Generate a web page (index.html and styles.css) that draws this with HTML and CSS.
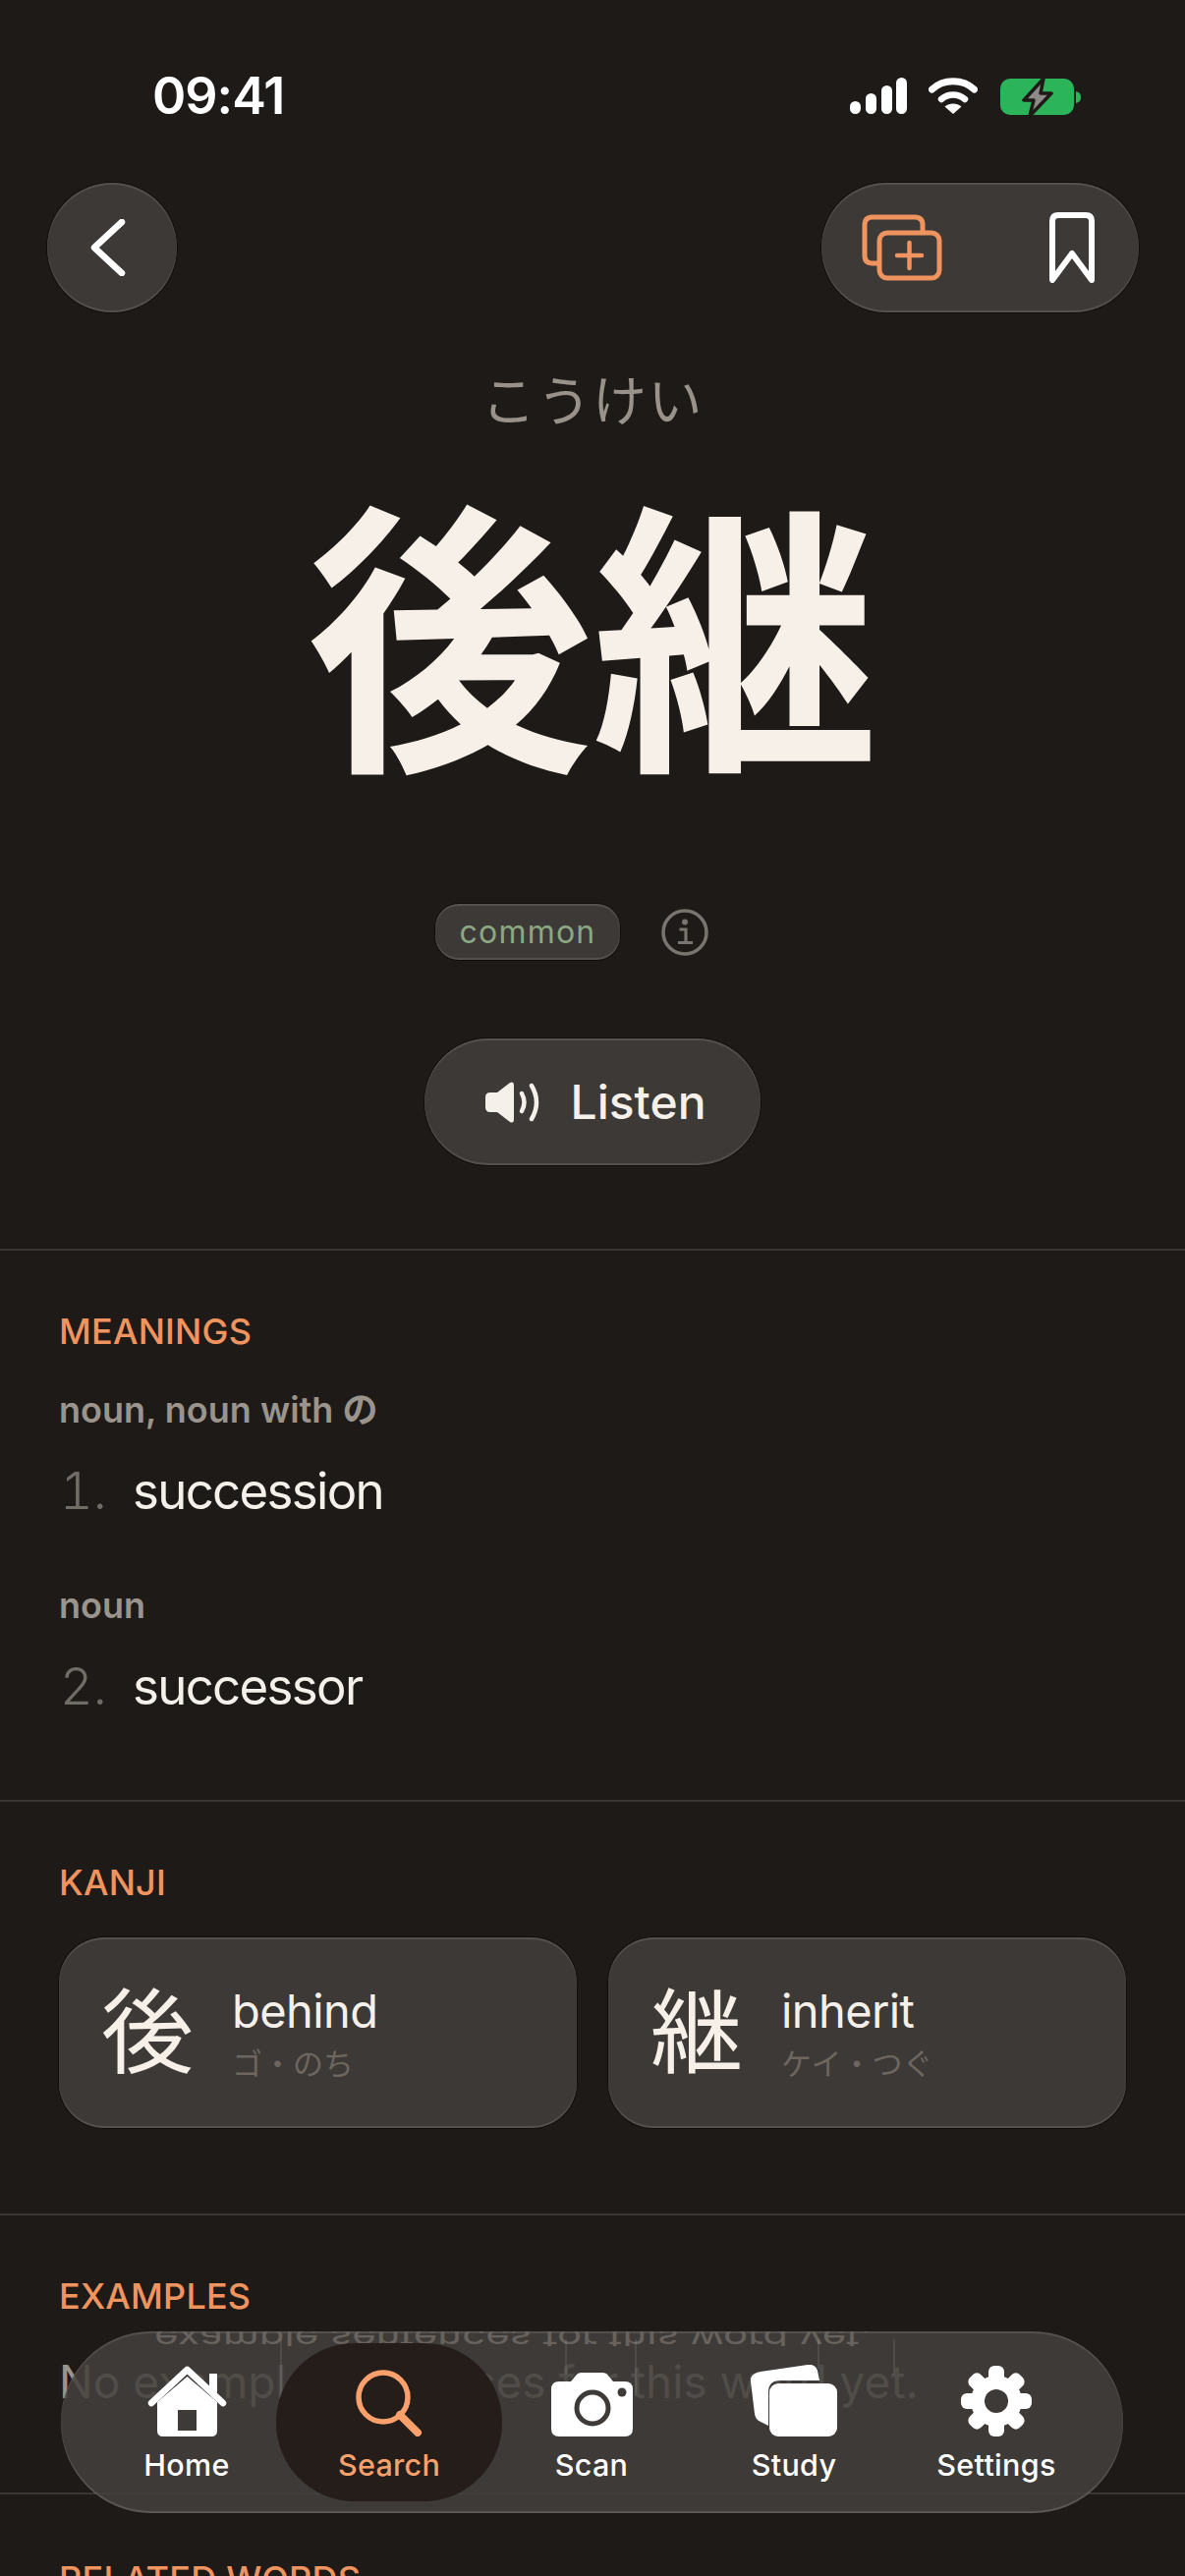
FILE: index.html
```html
<!DOCTYPE html>
<html lang="en">
<head>
    <meta charset="UTF-8">
    <meta name="viewport" content="width=device-width, initial-scale=1.0">
    <title>後継</title>
    <link rel="stylesheet" href="styles.css">
</head>
<body>
<div class="screen">
    <div class="status-bar">
        <span class="status-time">09:41</span>
        <div class="status-icons">
            <svg class="icon-signal" width="58" height="37" viewBox="0 0 58 37">
                <rect x="0" y="24" width="11" height="13" rx="5.5" fill="#fff"/>
                <rect x="16" y="16" width="11" height="21" rx="5.5" fill="#fff"/>
                <rect x="32" y="8" width="11" height="29" rx="5.5" fill="#fff"/>
                <rect x="47" y="0" width="11" height="37" rx="5.5" fill="#fff"/>
            </svg>
            <svg class="icon-wifi" width="50" height="37" viewBox="0 0 50 37">
                <path d="M3.5 12 C15 1 35 1 46.5 12" fill="none" stroke="#fff" stroke-width="7" stroke-linecap="round"/>
                <path d="M13 22 C20 16 30 16 37 22" fill="none" stroke="#fff" stroke-width="6.5" stroke-linecap="round"/>
                <path d="M25 37 L16.5 29.5 C21 25.5 29 25.5 33.5 29.5 Z" fill="#fff"/>
            </svg>
            <svg class="icon-battery" width="82" height="42" viewBox="0 0 82 42">
                <rect x="0" y="1" width="75" height="37" rx="10" fill="#2bb45a"/>
                <path d="M77 14 C81 15 82 17 82 20 C82 23 81 25 77 26 Z" fill="#2bb45a"/>
                <path d="M44 1 L24 23 H34 L30 39 L52 16 H41 Z" fill="#8d8a87" stroke="#1e1a18" stroke-width="3.5" stroke-linejoin="round"/>
            </svg>
        </div>
    </div>

    <div class="top-bar">
        <button class="glass round-btn">
            <svg width="36" height="58" viewBox="0 0 36 58">
                <path d="M32 3 L4 29 L32 55" fill="none" stroke="#fff" stroke-width="6.5" stroke-linecap="round" stroke-linejoin="round"/>
            </svg>
        </button>
        <div class="glass action-pill">
            <svg width="82" height="68" viewBox="0 0 82 68">
                <path d="M16 50 H11 Q3 50 3 42 V11 Q3 3 11 3 H54 Q62 3 62 11 V18" fill="none" stroke="#f0945f" stroke-width="5"/>
                <rect x="18" y="19" width="61" height="46" rx="8" fill="none" stroke="#f0945f" stroke-width="5"/>
                <path d="M48.5 29 V55 M36 42 H61" stroke="#f0945f" stroke-width="4.5" stroke-linecap="round"/>
            </svg>
            <svg width="46" height="72" viewBox="0 0 46 72">
                <path d="M3 69 V9 Q3 3 9 3 H37 Q43 3 43 9 V69 L23 42 Z" fill="none" stroke="#fff" stroke-width="6" stroke-linejoin="round"/>
            </svg>
        </div>
    </div>

    <div class="headword">
        <div class="reading">こうけい</div>
        <h1 class="word">後継</h1>
        <div class="tag-row">
            <span class="glass tag">common</span>
            <svg class="icon-info" width="48" height="48" viewBox="0 0 48 48">
                <circle cx="24" cy="24" r="22" fill="none" stroke="#79746e" stroke-width="3.5"/>
                <circle cx="24" cy="13.5" r="3" fill="#79746e"/>
                <path d="M18.5 21 H25 V34 M17 34.5 H32" fill="none" stroke="#79746e" stroke-width="3.2"/>
            </svg>
        </div>
        <button class="glass listen-btn">
            <svg width="56" height="44" viewBox="0 0 56 44">
                <path d="M6 12 H13 L26 2 Q30 0 30 5 V39 Q30 44 26 42 L13 32 H6 Q1 32 1 27 V17 Q1 12 6 12 Z" fill="#f5f0ea"/>
                <path d="M38 13 Q43 22 38 31" fill="none" stroke="#f5f0ea" stroke-width="4.5" stroke-linecap="round"/>
                <path d="M48 5 Q58 22 48 39" fill="none" stroke="#f5f0ea" stroke-width="4.5" stroke-linecap="round"/>
            </svg>
            <span>Listen</span>
        </button>
    </div>

    <section class="section meanings">
        <h2 class="section-title">MEANINGS</h2>
        <div class="pos">noun, noun with の</div>
        <div class="meaning"><span class="num">1.</span><span>succession</span></div>
        <div class="pos pos-next">noun</div>
        <div class="meaning"><span class="num">2.</span><span>successor</span></div>
    </section>

    <section class="section kanji">
        <h2 class="section-title">KANJI</h2>
        <div class="kanji-grid">
            <div class="glass kanji-card">
                <span class="kanji-char">後</span>
                <div>
                    <div class="kanji-meaning">behind</div>
                    <div class="kanji-read">ゴ・のち</div>
                </div>
            </div>
            <div class="glass kanji-card">
                <span class="kanji-char">継</span>
                <div>
                    <div class="kanji-meaning">inherit</div>
                    <div class="kanji-read">ケイ・つぐ</div>
                </div>
            </div>
        </div>
    </section>

    <section class="section examples">
        <h2 class="section-title">EXAMPLES</h2>
        <p class="empty-note">No example sentences for this word yet.</p>
    </section>

    <section class="section related">
        <h2 class="section-title">RELATED WORDS</h2>
    </section>

    <nav class="tab-bar">
        <div class="tab-mirror"><span>example sentences for this word yet.</span></div>
        <i class="streak streak-a"></i>
        <i class="streak streak-b"></i>
        <i class="streak streak-c"></i>
        <i class="streak streak-d"></i>
        <i class="streak streak-e"></i>
        <a class="tab">
            <svg width="81" height="72" viewBox="0 0 81 72">
                <path d="M10 37 L40.5 11 L71 37 V66 Q71 72 65 72 H16 Q10 72 10 66 Z M31 45 V66 H50 V45 Z" fill="#fff" fill-rule="evenodd"/>
                <path d="M63 8 H71 V28 L63 21 Z" fill="#fff"/>
                <path d="M4 38 L40.5 4 L77 38" fill="none" stroke="#fff" stroke-width="6.5" stroke-linecap="round" stroke-linejoin="round"/>
            </svg>
            <span>Home</span>
        </a>
        <a class="tab tab-active">
            <svg width="68" height="68" viewBox="0 0 68 68">
                <circle cx="28" cy="28" r="25" fill="none" stroke="#f9a06c" stroke-width="5.5"/>
                <path d="M45 46 L63 64" stroke="#f9a06c" stroke-width="8" stroke-linecap="round"/>
            </svg>
            <span>Search</span>
        </a>
        <a class="tab">
            <svg width="83" height="65" viewBox="0 0 83 65">
                <path d="M8 9 H20 L25 3 Q27 0 31 0 H52 Q56 0 58 3 L63 9 H75 Q83 9 83 17 V57 Q83 65 75 65 H8 Q0 65 0 57 V17 Q0 9 8 9 Z" fill="#fff"/>
                <circle cx="42" cy="36" r="16" fill="#fff" stroke="#3e3a37" stroke-width="5"/>
                <circle cx="72" cy="20" r="4.5" fill="#3e3a37"/>
            </svg>
            <span>Scan</span>
        </a>
        <a class="tab">
            <svg width="88" height="73" viewBox="0 0 88 73">
                <path d="M10 7 L58 0 Q66 -1 68 6 L70 16 H30 Q18 16 18 28 V62 L10 58 Q5 56 4 50 L0 17 Q-1 9 10 7 Z" fill="#fff"/>
                <rect x="19" y="19" width="69" height="54" rx="9" fill="#fff"/>
            </svg>
            <span>Study</span>
        </a>
        <a class="tab">
            <svg width="72" height="72" viewBox="0 0 72 72">
                <g fill="#fff">
                    <rect x="28" y="0" width="16" height="72" rx="6"/>
                    <rect x="28" y="0" width="16" height="72" rx="6" transform="rotate(45 36 36)"/>
                    <rect x="28" y="0" width="16" height="72" rx="6" transform="rotate(90 36 36)"/>
                    <rect x="28" y="0" width="16" height="72" rx="6" transform="rotate(135 36 36)"/>
                    <circle cx="36" cy="36" r="26"/>
                </g>
                <circle cx="36" cy="36" r="12" fill="#3e3a37"/>
            </svg>
            <span>Settings</span>
        </a>
    </nav>
</div>
</body>
</html>
```

FILE: styles.css
```css
* {
    box-sizing: border-box;
}
html, body {
    margin: 0;
    padding: 0;
    background-color: #1e1a18;
}
body {
    font-family: Inter, "Noto Sans CJK JP", sans-serif;
    color: #f5f0ea;
}
.screen {
    position: relative;
    width: 1206px;
    height: 2622px;
    overflow: hidden;
}
.glass {
    background-color: #3d3936;
    box-shadow: inset 0 2px 1px rgba(255, 255, 255, 0.13), inset 0 -2px 1px rgba(255, 255, 255, 0.13), 0 0 0 1px rgba(0, 0, 0, 0.45);
    border: none;
}
button {
    font-family: inherit;
    color: inherit;
    padding: 0;
}

/* status bar */
.status-bar {
    height: 186px;
    padding: 72px 106px 0 155px;
    display: flex;
    justify-content: space-between;
    align-items: flex-start;
}
.status-time {
    font-size: 52px;
    font-weight: 600;
    line-height: 52px;
    letter-spacing: -1px;
    color: #fff;
}
.status-icons {
    display: flex;
    align-items: flex-start;
    padding-top: 7px;
}
.icon-signal {
    margin-right: 22px;
}
.icon-wifi {
    margin-right: 23px;
}

/* top buttons */
.top-bar {
    display: flex;
    justify-content: space-between;
    padding: 0 47px 0 48px;
}
.round-btn {
    width: 132px;
    height: 132px;
    border-radius: 50%;
    display: flex;
    align-items: center;
    padding-left: 44px;
}
.action-pill {
    width: 323px;
    height: 132px;
    border-radius: 66px;
    display: flex;
    align-items: center;
    justify-content: space-between;
    padding: 0 45px 0 41px;
}

/* headword */
.headword {
    height: 955px;
    padding-top: 50px;
    display: flex;
    flex-direction: column;
    align-items: center;
    border-bottom: 2px solid #3a3632;
}
.reading {
    font-size: 55px;
    line-height: 80px;
    color: #98928a;
    letter-spacing: 1.5px;
}
.word {
    margin: 58px 0 0;
    font-size: 291px;
    line-height: 300px;
    font-weight: 700;
    color: #f6f0e8;
}
.tag-row {
    margin-top: 114px;
    display: flex;
    align-items: center;
    gap: 42px;
    margin-right: 42px;
}
.tag {
    width: 188px;
    height: 57px;
    border-radius: 24px;
    display: flex;
    align-items: center;
    justify-content: center;
    font-size: 32px;
    font-weight: 400;
    letter-spacing: 1.2px;
    color: #8aa882;
}
.listen-btn {
    margin-top: 80px;
    width: 342px;
    height: 129px;
    padding-left: 6px;
    border-radius: 65px;
    display: flex;
    align-items: center;
    justify-content: center;
    gap: 31px;
    font-size: 48px;
    font-weight: 500;
}

/* sections */
.section {
    padding: 0 60px;
    border-bottom: 2px solid #3a3632;
}
.section-title {
    margin: 0;
    font-size: 36px;
    font-weight: 500;
    line-height: 42px;
    color: #f0945f;
    letter-spacing: 0.2px;
}
.meanings {
    height: 561px;
    padding-top: 61px;
}
.pos {
    margin-top: 37px;
    font-size: 36px;
    font-weight: 600;
    line-height: 44px;
    color: #9a948c;
}
.pos-next {
    margin-top: 62px;
}
.meaning {
    margin-top: 29px;
    display: flex;
    font-size: 51px;
    line-height: 64px;
    font-weight: 400;
    letter-spacing: -1.7px;
}
.num {
    width: 75px;
    padding-left: 1px;
    font-size: 52px;
    font-variant-numeric: tabular-nums;
    letter-spacing: 0;
    color: #716c66;
    font-weight: 300;
}
.kanji {
    height: 421px;
    padding-top: 61px;
}
.kanji-grid {
    margin-top: 35px;
    display: grid;
    grid-template-columns: 527px 527px;
    gap: 32px;
}
.kanji-card {
    height: 194px;
    border-radius: 46px;
    display: flex;
    align-items: center;
    gap: 39px;
    padding: 0 0 0 43px;
}
.kanji-char {
    font-size: 94px;
    line-height: 110px;
    color: #f6f0e8;
}
.kanji-meaning {
    font-size: 47px;
    line-height: 58px;
    font-weight: 400;
    letter-spacing: -0.6px;
}
.kanji-read {
    margin-top: 5px;
    font-size: 31px;
    line-height: 40px;
    color: #6c665f;
}
.examples {
    height: 284px;
    padding-top: 61px;
}
.empty-note {
    margin: 36px 0 0;
    font-size: 46px;
    line-height: 60px;
    color: #9a948c;
    white-space: nowrap;
}
.related {
    padding-top: 65px;
    border-bottom: none;
}

/* floating tab bar */
.tab-bar {
    position: absolute;
    left: 62px;
    top: 2373px;
    width: 1081px;
    height: 185px;
    border-radius: 92px;
    padding: 12px 25px;
    display: grid;
    grid-template-columns: repeat(5, 206px);
    overflow: hidden;
    background-color: rgba(68, 64, 60, 0.86);
    box-shadow: inset 0 2px 1px rgba(255, 255, 255, 0.12), inset 0 -2px 1px rgba(255, 255, 255, 0.16);
}
.tab-mirror {
    position: absolute;
    left: 95px;
    top: 0;
    height: 15px;
    overflow: hidden;
    white-space: nowrap;
    font-size: 42px;
    line-height: 15px;
    color: #67625d;
}
.tab-mirror span {
    display: inline-block;
    transform: scaleY(-0.7);
}
.streak {
    position: absolute;
    top: 8px;
    width: 2px;
    background-color: rgba(255, 255, 255, 0.09);
}
.streak-a { left: 223px; height: 60px; }
.streak-b { left: 513px; height: 36px; }
.streak-c { left: 584px; height: 58px; }
.streak-d { left: 770px; height: 30px; }
.streak-e { left: 847px; height: 36px; }
.tab {
    position: relative;
    display: flex;
    flex-direction: column;
    align-items: center;
    justify-content: flex-end;
    gap: 11px;
    height: 161px;
    padding-bottom: 19px;
    border-radius: 80px;
    font-size: 30.5px;
    font-weight: 500;
    line-height: 36px;
    letter-spacing: 0.3px;
    color: #fff;
}
.tab-active {
    background-color: #241d19;
    color: #f9a06c;
    margin: 0 -12px;
}
```
